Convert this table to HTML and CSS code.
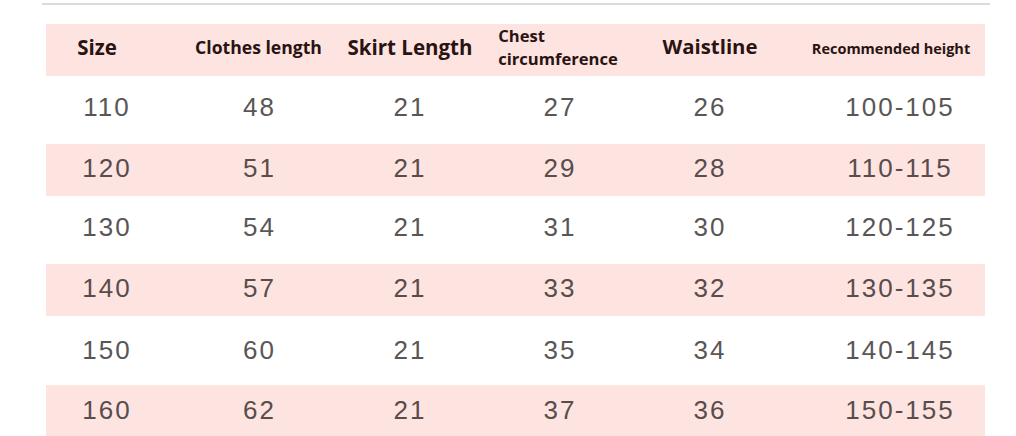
FILE: index.html
```html
<!DOCTYPE html>
<html>
<head>
<meta charset="utf-8">
<link rel="stylesheet" href="styles.css">
</head>
<body>
<div class="page">
  <div class="topline"></div>
  <div class="table">
    <div class="row head">
      <div class="c c1 h-size">Size</div>
      <div class="c c2 h-clothes">Clothes length</div>
      <div class="c c3 h-skirt">Skirt Length</div>
      <div class="c c4 h-chest"><span class="chest">Chest<br>circumference</span></div>
      <div class="c c5 h-waist">Waistline</div>
      <div class="c c6 h-rec">Recommended height</div>
    </div>
    <div class="row data white r1"><div class="c c1">110</div><div class="c c2">48</div><div class="c c3">21</div><div class="c c4">27</div><div class="c c5">26</div><div class="c c6">100-105</div></div>
    <div class="row data pink r2"><div class="c c1">120</div><div class="c c2">51</div><div class="c c3">21</div><div class="c c4">29</div><div class="c c5">28</div><div class="c c6">110-115</div></div>
    <div class="row data white r3"><div class="c c1">130</div><div class="c c2">54</div><div class="c c3">21</div><div class="c c4">31</div><div class="c c5">30</div><div class="c c6">120-125</div></div>
    <div class="row data pink r4"><div class="c c1">140</div><div class="c c2">57</div><div class="c c3">21</div><div class="c c4">33</div><div class="c c5">32</div><div class="c c6">130-135</div></div>
    <div class="row data white r5"><div class="c c1">150</div><div class="c c2">60</div><div class="c c3">21</div><div class="c c4">35</div><div class="c c5">34</div><div class="c c6">140-145</div></div>
    <div class="row data pink r6"><div class="c c1">160</div><div class="c c2">62</div><div class="c c3">21</div><div class="c c4">37</div><div class="c c5">36</div><div class="c c6">150-155</div></div>
  </div>
</div>
</body>
</html>
```
FILE: styles.css
```css
html, body {
  margin: 0;
  padding: 0;
  background: #ffffff;
}
.page {
  width: 1016px;
  height: 436px;
  overflow: hidden;
}
.topline {
  margin: 3px 26px 0 42px;
  height: 2px;
  background: #dadada;
}
.table {
  margin: 19px 31px 0 46px;
  display: flex;
  flex-direction: column;
}
.row {
  display: grid;
  grid-template-columns: 138px 151px 150px 150px 170px 180px;
  align-items: center;
}
.head {
  height: 52px;
  box-sizing: border-box;
  padding-bottom: 6px;
  background: #fde4e0;
  color: #2a1313;
  font-family: "Open Sans", "Liberation Sans", sans-serif;
  font-weight: 700;
}
.c {
  text-align: center;
  white-space: nowrap;
}
.h-size { font-size: 20.5px; padding-right: 36px; }
.h-clothes { font-size: 17.6px; padding-right: 2px; }
.h-skirt { font-size: 20.5px; }
.h-chest { font-size: 16.6px; line-height: 22.6px; padding-top: 1px; }
.chest { display: inline-block; text-align: left; margin-left: -4px; }
.h-waist { font-size: 20.4px; padding-right: 20px; margin-top: -3px; }
.h-rec { font-size: 14.5px; padding-right: 8px; margin-top: 3px; }
.data {
  box-sizing: border-box;
  font-family: "Liberation Sans", Arial, sans-serif;
  font-size: 26px;
  letter-spacing: 2px;
  color: #5a5656;
}
.data.white { height: 68px; padding-bottom: 6px; }
.data.pink { height: 52px; padding-bottom: 4px; background: #fde4e0; color: #594c4c; }
.r3 { height: 68px; padding-bottom: 2px; }
.r4 { height: 51px; }
.data.r5 { height: 69px; padding-bottom: 0; }
.data.r6 { height: 51px; padding-bottom: 0; }
.data .c1 { padding-right: 16px; }
.data .c5 { padding-right: 20px; }
.data .c6 { padding-left: 10px; }
```
